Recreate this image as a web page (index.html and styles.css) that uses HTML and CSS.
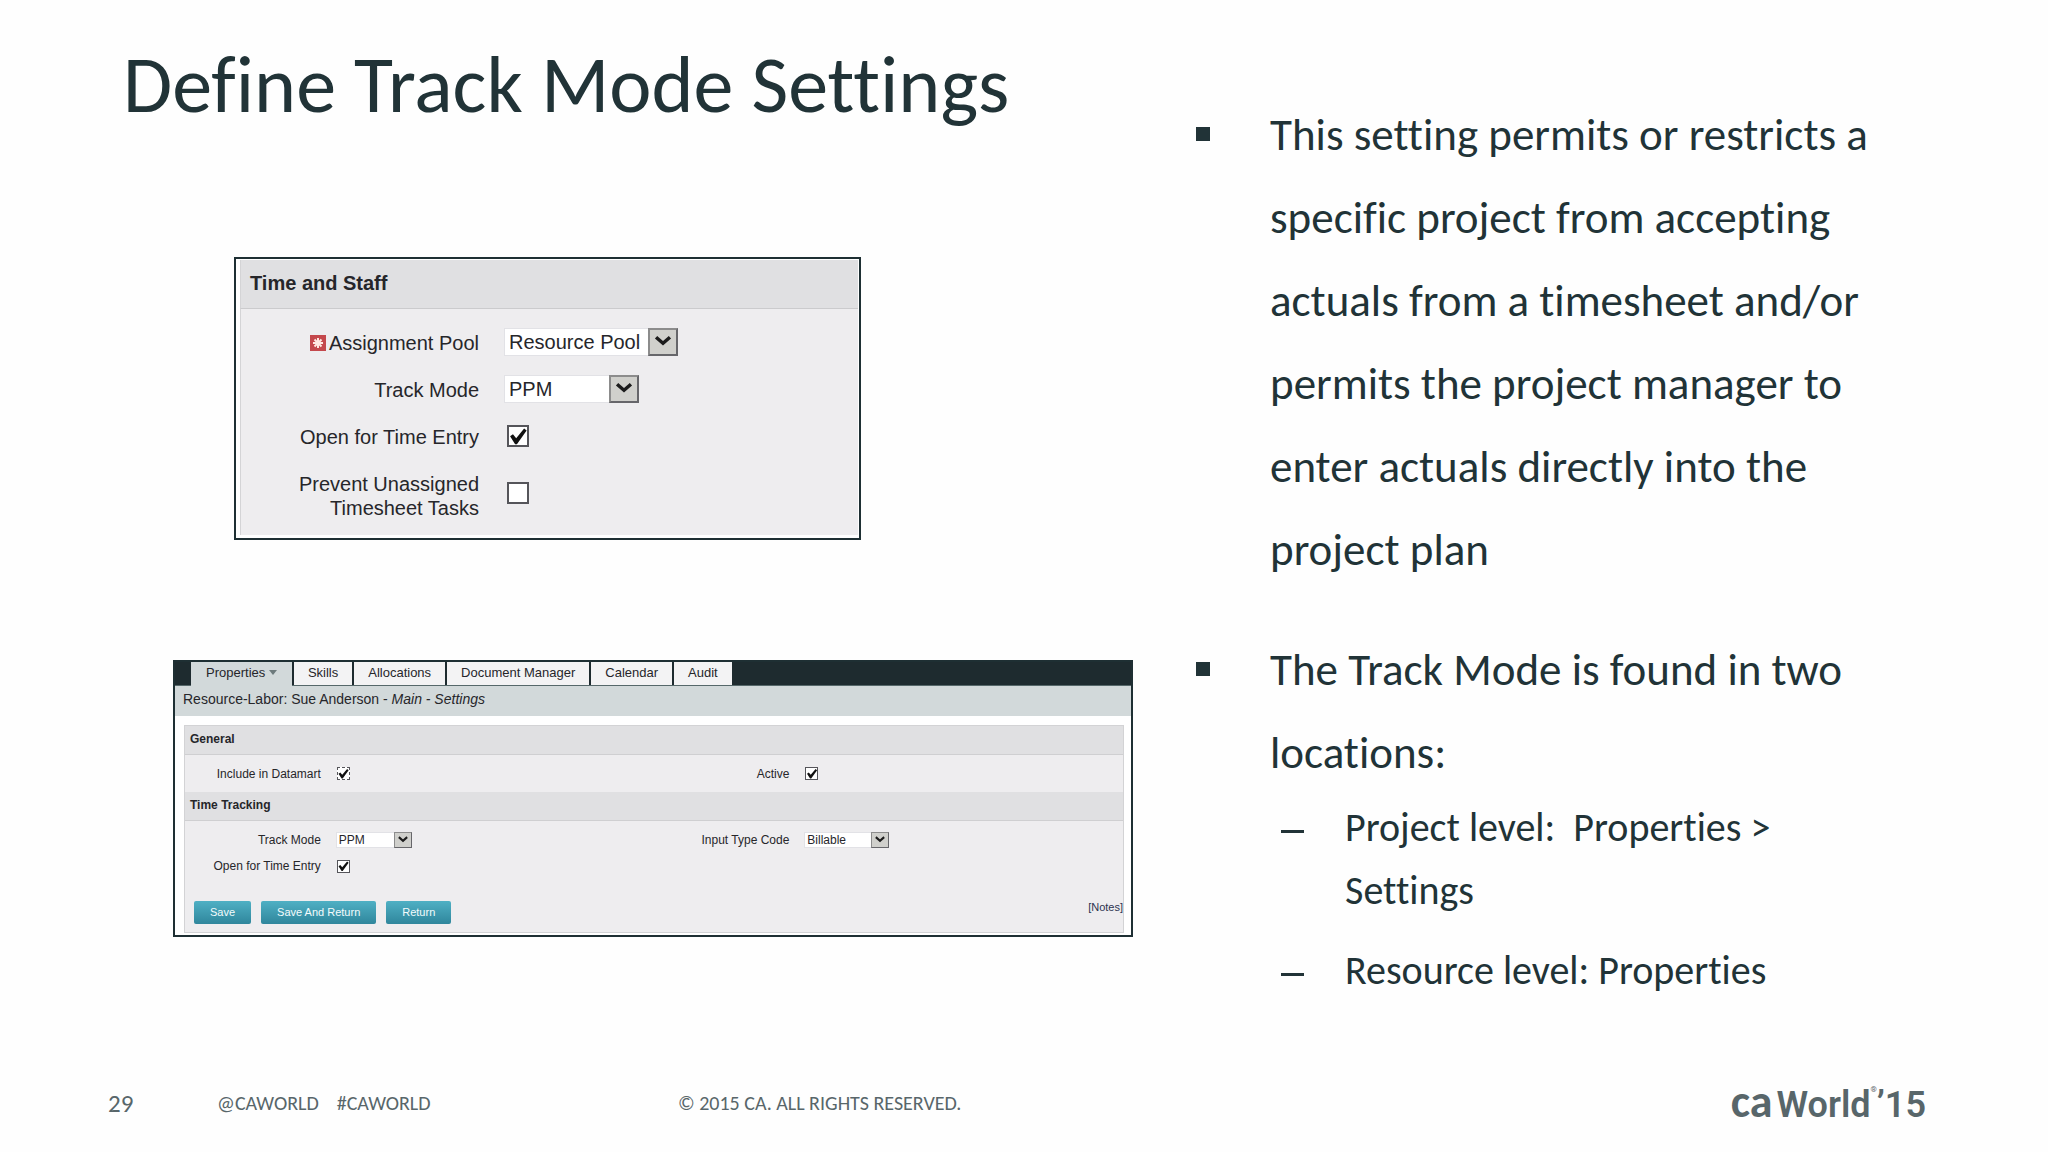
FILE: index.html
```html
<!doctype html>
<html lang="en">
  <head>
    <meta charset="utf-8">
    <meta name="viewport" content="width=device-width, initial-scale=1">
    <title>Define Track Mode Settings</title>
    <link rel="stylesheet" href="styles.css">
  </head>
  <body>
    <main>
      <div class="screens">
        <h1>Define Track Mode Settings</h1>

        <form class="staff">
          <h2>Time and Staff</h2>
          <div class="staff-fields">
            <label for="pool">
              <svg class="required" viewBox="0 0 16 16" aria-hidden="true">
                <rect width="16" height="16" fill="#c4484c"/>
                <path d="M8 3v10M3 8h10M4.5 4.5l7 7M11.5 4.5l-7 7" stroke="#ffe9e2" stroke-width="2"/>
              </svg>Assignment Pool</label>
            <span class="select pool">
              <select id="pool"><option>Resource Pool</option></select>
              <svg class="arrow" viewBox="0 0 30 27" aria-hidden="true"><path d="M7 8l8 7 8-7"/></svg>
            </span>
            <label for="mode">Track Mode</label>
            <span class="select mode">
              <select id="mode"><option>PPM</option></select>
              <svg class="arrow" viewBox="0 0 30 27" aria-hidden="true"><path d="M7 8l8 7 8-7"/></svg>
            </span>
            <label for="open">Open for Time Entry</label>
            <input type="checkbox" id="open" checked>
            <label for="prevent">Prevent Unassigned<br>Timesheet Tasks</label>
            <input type="checkbox" id="prevent">
          </div>
        </form>

        <form class="resource">
          <nav>
            <a href="#" class="active">Properties <svg class="caret" viewBox="0 0 8 5" aria-hidden="true"><path d="M0 0h8L4 5z"/></svg></a>
            <a href="#">Skills</a>
            <a href="#">Allocations</a>
            <a href="#">Document Manager</a>
            <a href="#">Calendar</a>
            <a href="#">Audit</a>
          </nav>
          <p class="crumb">Resource-Labor: Sue Anderson - <em>Main - Settings</em></p>
          <div class="sections">
            <h3>General</h3>
            <div class="fields general">
              <label for="datamart">Include in Datamart</label>
              <input type="checkbox" id="datamart" class="focused" checked>
              <label for="active">Active</label>
              <input type="checkbox" id="active" checked>
            </div>
            <h3>Time Tracking</h3>
            <div class="fields tracking">
              <label for="res-mode">Track Mode</label>
              <span class="select res-mode">
                <select id="res-mode"><option>PPM</option></select>
                <svg class="arrow" viewBox="0 0 30 27" aria-hidden="true"><path d="M7 8l8 7 8-7"/></svg>
              </span>
              <label for="code">Input Type Code</label>
              <span class="select code">
                <select id="code"><option>Billable</option></select>
                <svg class="arrow" viewBox="0 0 30 27" aria-hidden="true"><path d="M7 8l8 7 8-7"/></svg>
              </span>
              <label for="res-open">Open for Time Entry</label>
              <input type="checkbox" id="res-open" checked>
            </div>
            <div class="actions">
              <button type="button">Save</button>
              <button type="button">Save And Return</button>
              <button type="button">Return</button>
              <a href="#">[Notes]</a>
            </div>
          </div>
        </form>
      </div>

      <ul class="points">
        <li><div>This setting permits or restricts a specific project from accepting actuals from a timesheet and/or permits the project manager to enter actuals directly into the project plan</div></li>
        <li>
          <div>
            The Track Mode is found in two locations:
            <ul>
              <li><div>Project level:&nbsp; Properties &gt; Settings</div></li>
              <li><div>Resource level: Properties</div></li>
            </ul>
          </div>
        </li>
      </ul>
    </main>

    <footer>
      <span class="page">29</span>
      <span class="tags"><span>@CAWORLD</span><span>#CAWORLD</span></span>
      <span class="rights">© 2015 CA. ALL RIGHTS RESERVED.</span>
      <div class="logo"><b>ca</b><span>World</span><sup>®</sup><span>’15</span></div>
    </footer>
  </body>
</html>
```

FILE: styles.css
```css
* {
  box-sizing: border-box;
}

body {
  margin: 0;
  min-height: 100vh;
  display: flex;
  flex-direction: column;
  background: #fefefe;
  color: #213337;
  font-family: Carlito, Lato, sans-serif;
  font-variant-ligatures: none;
}

main {
  display: grid;
  grid-template-columns: 960fr 700fr;
  column-gap: 62px;
  padding: 41px 153px 0 173px;
}

h1 {
  margin: 0 0 129px -50px;
  font-size: 80px;
  line-height: 87px;
  font-weight: 400;
}

form {
  border: 2px solid #1e2f33;
  background: #fff;
  color: #26262a;
  font-family: "Liberation Sans", Arial, sans-serif;
}

/* shared controls */
input[type="checkbox"] {
  appearance: none;
  display: grid;
  width: 22px;
  height: 22px;
  margin: 0 0 0 3px;
  border: 2px solid #55555a;
  background: #fff;
}

input[type="checkbox"]:checked::before {
  content: "";
  background: #111;
  clip-path: polygon(6% 52%, 22% 40%, 40% 62%, 84% 8%, 98% 20%, 44% 96%, 34% 96%);
}

.select {
  display: grid;
  height: 28px;
}

.select select,
.select .arrow {
  grid-area: 1 / 1;
}

.select select {
  appearance: none;
  width: 100%;
  margin: 0;
  padding: 0 0 0 4px;
  border: 1px solid #e2e2e6;
  border-radius: 0;
  background: #fff;
  color: inherit;
  font: inherit;
}

.arrow {
  justify-self: end;
  width: 30px;
  height: 100%;
  border: 2px solid #66666a;
  border-top-color: #8c8c8c;
  border-left-color: #8c8c8c;
  background: #d0d0cc;
  pointer-events: none;
}

.arrow path {
  fill: none;
  stroke: #1c1c1c;
  stroke-width: 4;
}

/* time and staff */
.staff {
  width: 66%;
  max-width: 627px;
  margin: 0 0 120px 61px;
  padding: 1px 1px 3px 4px;
  font-size: 20px;
}

.staff h2 {
  margin: 0;
  padding: 0 9px 2px;
  border-left: 1px solid #d4d4d6;
  border-bottom: 1px solid #cbcbcd;
  background: #e0e0e2;
  font-size: 20px;
  line-height: 46px;
}

.staff-fields {
  display: grid;
  grid-template-columns: 238px 1fr;
  gap: 19px 25px;
  align-items: center;
  padding: 19px 0 18px;
  border-left: 1px solid #d4d4d6;
  background: #eeedef;
}

.staff-fields label {
  height: 28px;
  padding-top: 3px;
  text-align: right;
  line-height: 24px;
}

.staff-fields label:last-of-type {
  height: 48px;
}

.required {
  width: 16px;
  height: 16px;
  margin-right: 3px;
  vertical-align: -1px;
}

.pool {
  width: 174px;
}

.mode {
  width: 135px;
}

/* resource properties */
.resource {
  font-size: 12px;
}

.resource nav {
  display: flex;
  gap: 2px;
  padding-left: 16px;
  border-bottom: 1px solid #56686a;
  background: #1e2b2f;
}

.resource nav a {
  padding: 0 14px 2px;
  background: #f3f3f4;
  color: inherit;
  font-size: 13px;
  line-height: 21px;
  text-decoration: none;
}

.resource nav .active {
  margin-bottom: -1px;
  padding: 0 15px 2px;
  background: #d2d9da;
}

.caret {
  width: 8px;
  height: 5px;
  vertical-align: 2px;
  fill: #6d7a7c;
}

.crumb {
  margin: 0 0 9px;
  padding: 0 8px 4px;
  background: #d2d9da;
  font-size: 14px;
  line-height: 26px;
}

.sections {
  margin: 0 7px 2px 9px;
  border: 1px solid #d3d3d5;
  background: #eeedef;
}

.sections h3 {
  margin: 0;
  padding: 0 5px 2px;
  border-bottom: 1px solid #cfcfd1;
  background: #e0e0e2;
  font-size: 12px;
  line-height: 26px;
}

.fields {
  display: grid;
  grid-template-columns: 136fr 303fr 136fr 319fr;
  column-gap: 15px;
  align-items: center;
}

.general {
  height: 37px;
}

.tracking {
  grid-auto-rows: 26px;
  padding: 6px 0 22px;
}

.fields label {
  text-align: right;
}

.fields input[type="checkbox"] {
  width: 13px;
  height: 13px;
  margin-left: 1px;
  border-width: 1px;
}

.fields .focused {
  border-style: dashed;
}

.fields .select {
  height: 16px;
}

.fields .select select {
  padding-left: 2px;
}

.fields .arrow {
  width: 18px;
  border-width: 1px;
}

.res-mode {
  width: 76px;
}

.code {
  width: 85px;
}

.actions {
  display: flex;
  gap: 10px;
  padding: 0 0 8px 9px;
}

.actions button {
  padding: 0 16px;
  border: 0;
  border-radius: 2px;
  background: linear-gradient(#4fb0c4, #2f869c);
  color: #f4fbfc;
  font-family: inherit;
  font-size: 11px;
  line-height: 23px;
}

.actions a {
  margin-left: auto;
  color: #2c3350;
  font-size: 11px;
  text-decoration: none;
}

/* talking points */
.points {
  margin: 52px 0 0;
  padding: 0;
  list-style: none;
  font-size: 45px;
  line-height: 83px;
}

.points li {
  display: grid;
  grid-template-columns: 75px 1fr;
}

.points > li + li {
  margin-top: 37px;
}

.points li::before {
  content: "";
  width: 14px;
  height: 14px;
  margin: 34px 0 0 1px;
  background: #213337;
}

.points ul {
  margin: 2px 0 0;
  padding-left: 10px;
  list-style: none;
  font-size: 40px;
  line-height: 63px;
}

.points ul li {
  grid-template-columns: 65px 1fr;
}

.points ul li + li {
  margin-top: 17px;
}

.points ul li::before {
  width: 23px;
  height: 3px;
}

footer {
  display: grid;
  grid-template-columns: 109px 461px 1fr auto;
  align-items: center;
  margin-top: auto;
  padding: 0 122px 24px 108px;
  color: #58666a;
  font-size: 20px;
}

.page {
  font-size: 25px;
}

.tags {
  display: flex;
  gap: 18px;
}

.logo {
  display: flex;
  align-items: baseline;
  font-family: Roboto, sans-serif;
  font-size: 36px;
  font-weight: 600;
  line-height: 46px;
}

.logo b {
  margin-right: 4px;
  font-family: Carlito, Lato, sans-serif;
  font-size: 46px;
  font-weight: 700;
}

.logo sup {
  align-self: flex-start;
  font-size: 8px;
  line-height: 24px;
}
```
